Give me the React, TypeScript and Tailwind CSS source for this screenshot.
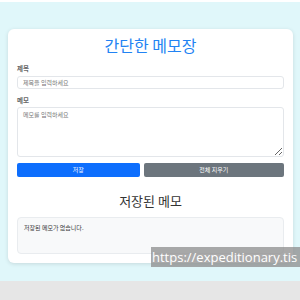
import React from "react";

const kr = { fontFamily: '"Noto Sans CJK KR", "Noto Sans", sans-serif' };

export default function App() {
  return (
    <div className="relative w-[300px] h-[300px] overflow-hidden bg-[#e6e6e6]" style={kr}>
      <div className="h-[2px] bg-white" />
      <div className="h-[279px] bg-[#e0f7fa] pt-[27px] px-[8px]">
        <div className="w-[285px] rounded-[6px] bg-white px-[9px] pt-[6px] pb-[9px] shadow-[0_1px_4px_rgba(0,0,0,0.12)]">
          <h1 className="text-center text-[16px] leading-[20px] text-[#2283f3]">간단한 메모장</h1>
          <div className="mt-[9px] text-[6.5px] leading-[8px] font-semibold text-[#666]">제목</div>
          <input
            className="mt-[4px] block w-full h-[13px] rounded-[3px] border border-[#e3e6ea] px-[5px] text-[6px] outline-none placeholder:text-[#777]"
            placeholder="제목을 입력하세요"
          />
          <div className="mt-[7px] text-[6.5px] leading-[8px] font-semibold text-[#666]">메모</div>
          <textarea
            className="mt-[3px] block w-full h-[50px] rounded-[3px] border border-[#e3e6ea] px-[5px] py-[3px] text-[6px] leading-[8px] outline-none placeholder:text-[#777]"
            placeholder="메모를 입력하세요"
          />
          <div className="mt-[6px] flex gap-[4px]">
            <button className="grow h-[14px] rounded-[2px] bg-[#0d6efd] px-[2px] text-[6px] leading-[14px] text-white">저장</button>
            <button className="grow h-[14px] rounded-[2px] bg-[#6c757d] px-[2px] text-[6px] leading-[14px] text-white">전체 지우기</button>
          </div>
          <h2 className="mt-[16px] text-center text-[13px] leading-[16px] text-[#333]">저장된 메모</h2>
          <div className="mt-[8px] h-[37px] rounded-[4px] border border-[#e9ecef] bg-[#f8f9fa] px-[6px] pt-[6px] text-[6px] leading-[8px] text-[#333]">
            저장된 메모가 없습니다.
          </div>
        </div>
      </div>
      <div
        className="absolute left-[151px] top-[247px] h-[20px] w-[149px] bg-[rgba(140,140,140,0.75)] pl-[1px] text-[13px] leading-[20px] text-white whitespace-nowrap"
        style={{ fontFamily: '"Open Sans", "Noto Sans", sans-serif' }}
      >
        https://expeditionary.tis
      </div>
    </div>
  );
}
